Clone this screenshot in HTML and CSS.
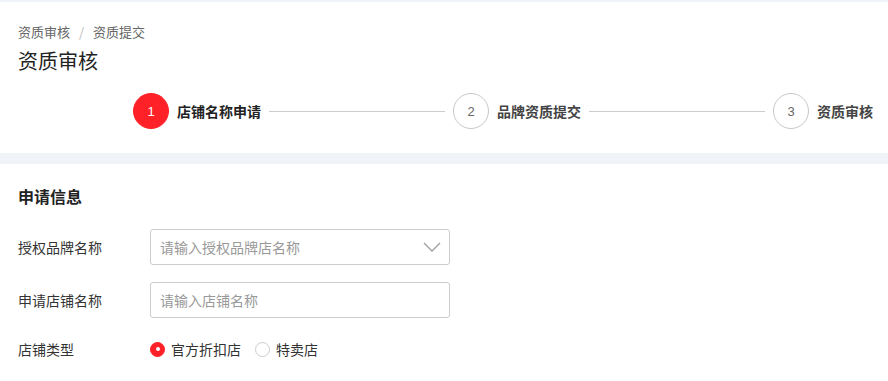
FILE: index.html
```html
<!DOCTYPE HTML>
<html lang="zh-CN">
<head>
    <meta charset="UTF-8">
    <title>资质审核</title>
    <link rel="stylesheet" href="styles.css">
</head>
<body>

<div class="header">
    <div class="crumbs">
        <span>资质审核</span>
        <span class="sep">/</span>
        <span>资质提交</span>
    </div>
    <h1>资质审核</h1>

    <ol class="steps">
        <li class="step active"><span class="num">1</span><span class="label">店铺名称申请</span></li>
        <li class="line"></li>
        <li class="step"><span class="num">2</span><span class="label">品牌资质提交</span></li>
        <li class="line"></li>
        <li class="step"><span class="num">3</span><span class="label">资质审核</span></li>
    </ol>
</div>

<div class="band"></div>

<div class="form">
    <h2>申请信息</h2>

    <div class="row first">
        <label>授权品牌名称</label>
        <div class="field select">
            <span class="ph">请输入授权品牌店名称</span>
            <svg class="chev" width="18" height="10" viewBox="0 0 18 10"><path d="M1 1 L9 9 L17 1" fill="none" stroke="#a0a0a0" stroke-width="1.3"/></svg>
        </div>
    </div>

    <div class="row">
        <label>申请店铺名称</label>
        <div class="field"><span class="ph">请输入店铺名称</span></div>
    </div>

    <div class="row radios">
        <label>店铺类型</label>
        <div class="opts">
            <span class="radio on"></span><span class="opt">官方折扣店</span>
            <span class="radio"></span><span class="opt">特卖店</span>
        </div>
    </div>
</div>

</body>
</html>
```

FILE: styles.css
```css
html, body { margin: 0; padding: 0; }
body { font-family: "Microsoft YaHei", "Noto Sans CJK SC", sans-serif; color: #333; background: #fff; border-top: 2px solid #f0f3f7; overflow: hidden; }

.header  { padding: 21px 0 0 18px; height: 130px; box-sizing: border-box; }
.crumbs  { font-size: 13px; color: #666; line-height: 18px; }
.crumbs .sep { color: #bbb; margin: 0 6px; }
h1       { font-size: 20px; font-weight: normal; margin: 6px 0 0; line-height: 28px; color: #222; }

.steps   { list-style: none; margin: 18px 0 0; padding: 0 0 0 115px; display: flex; align-items: center; white-space: nowrap; }
.steps li { flex-shrink: 0; }
.step    { display: flex; align-items: center; }
.step .num { width: 34px; height: 34px; border: 1px solid #c8c8c8; border-radius: 50%; display: flex; align-items: center; justify-content: center; font-family: "Liberation Sans", Arial, sans-serif; font-size: 13px; color: #666; }
.step .label { font-size: 14px; font-weight: bold; color: #444; margin-left: 8px; }
.step.active .num { background: #ff2128; border-color: #ff2128; color: #fff; }
.step.active .label { color: #222; }
.line    { width: 176px; height: 1px; background: #ccc; margin: 0 8px; }

.band    { height: 11px; background: #f0f3f7; margin-top: 21px; }

.form    { padding: 0 18px; }
h2       { font-size: 16px; font-weight: bold; margin: 21px 0 0; line-height: 22px; color: #222; }

.row     { display: flex; align-items: center; margin-top: 17px; }
.row.first { margin-top: 22px; }
.row label { width: 132px; font-size: 14px; color: #333; white-space: nowrap; }
.field   { width: 280px; height: 34px; border: 1px solid #ccc; border-radius: 3px; display: flex; align-items: center; padding: 0 9px; position: relative; }
.field .ph { font-size: 14px; color: #999; }
.select .chev { position: absolute; right: 8px; top: 12px; }

.row.radios { margin-top: 21px; }
.opts    { display: flex; align-items: center; font-size: 14px; }
.radio   { width: 15px; height: 15px; border: 1px solid #ccc; border-radius: 50%; box-sizing: border-box; position: relative; }
.radio.on { background: #ff2128; border-color: #ff2128; }
.radio.on::after { content: ""; position: absolute; left: 4.5px; top: 4.5px; width: 4px; height: 4px; border-radius: 50%; background: #fff; }
.opt     { margin: 0 14px 0 6px; color: #333; }
```
